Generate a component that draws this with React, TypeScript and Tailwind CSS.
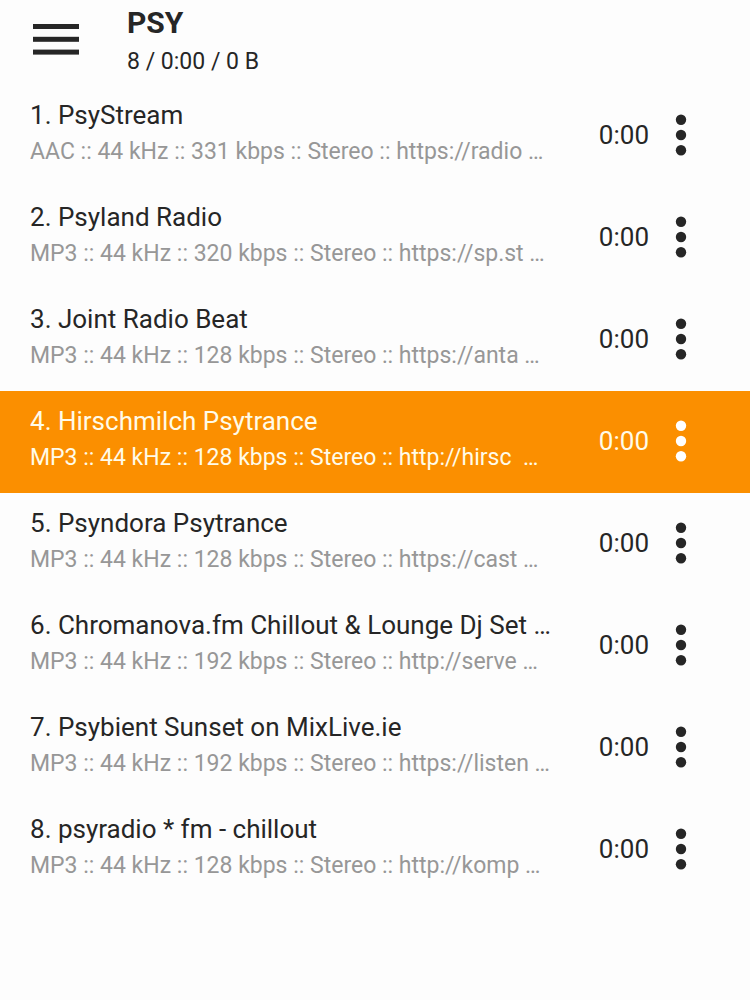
import React from 'react';

interface Station {
  title: string;
  info: string;
}

const stations: Station[] = [
  { title: 'PsyStream', info: 'AAC :: 44 kHz :: 331 kbps :: Stereo :: https://radio …' },
  { title: 'Psyland Radio', info: 'MP3 :: 44 kHz :: 320 kbps :: Stereo :: https://sp.st …' },
  { title: 'Joint Radio Beat', info: 'MP3 :: 44 kHz :: 128 kbps :: Stereo :: https://anta …' },
  { title: 'Hirschmilch Psytrance', info: 'MP3 :: 44 kHz :: 128 kbps :: Stereo :: http://hirsc  …' },
  { title: 'Psyndora Psytrance', info: 'MP3 :: 44 kHz :: 128 kbps :: Stereo :: https://cast …' },
  { title: 'Chromanova.fm Chillout & Lounge Dj Set …', info: 'MP3 :: 44 kHz :: 192 kbps :: Stereo :: http://serve …' },
  { title: 'Psybient Sunset on MixLive.ie', info: 'MP3 :: 44 kHz :: 192 kbps :: Stereo :: https://listen …' },
  { title: 'psyradio * fm - chillout', info: 'MP3 :: 44 kHz :: 128 kbps :: Stereo :: http://komp …' },
];

const ACTIVE_INDEX = 3;

const MenuIcon: React.FC = () => (
  <svg width="46" height="32" viewBox="0 0 46 32" fill="currentColor">
    <rect width="46" height="5" y="0" />
    <rect width="46" height="5" y="12.8" />
    <rect width="46" height="5" y="25.6" />
  </svg>
);

const MoreIcon: React.FC = () => (
  <svg width="12" height="42" viewBox="0 0 12 42" fill="currentColor">
    <circle cx="6" cy="5.8" r="5.2" />
    <circle cx="6" cy="21" r="5.2" />
    <circle cx="6" cy="36.3" r="5.2" />
  </svg>
);

const StationRow: React.FC<{ station: Station; number: number; active: boolean }> = ({ station, number, active }) => (
  <li className={active ? 'flex h-[102px] items-center bg-[#fb8f00] pb-0.5 pl-[30px] text-[#fffbe8]' : 'flex h-[102px] items-center pb-0.5 pl-[30px]'}>
    <div className="min-w-0 flex-1 pb-0.5">
      <div className="truncate text-[26px] leading-[36px]">{number}. {station.title}</div>
      <div className={active ? 'truncate text-[23px] leading-[38px] whitespace-pre' : 'truncate text-[23px] leading-[38px] whitespace-pre text-[#979797]'}>
        {station.info}
      </div>
    </div>
    <span className="shrink-0 text-[26px]">0:00</span>
    <button
      type="button"
      aria-label="More options"
      className={active ? 'flex h-full w-[101px] shrink-0 items-center pl-[26px] text-white' : 'flex h-full w-[101px] shrink-0 items-center pl-[26px]'}
    >
      <MoreIcon />
    </button>
  </li>
);

export default function App() {
  return (
    <div className="min-h-screen bg-[#fdfdfd] font-['Roboto',sans-serif] text-[#262626]">
      <header className="flex h-20 items-center gap-12 pl-[33px]">
        <button type="button" aria-label="Menu">
          <MenuIcon />
        </button>
        <div className="mt-0.5">
          <h1 className="text-[30px] leading-[42px] font-bold">PSY</h1>
          <p className="text-[23px] leading-[36px]">8 / 0:00 / 0 B</p>
        </div>
      </header>
      <ul className="pt-[5px]">
        {stations.map((station, index) => (
          <StationRow key={station.title} station={station} number={index + 1} active={index === ACTIVE_INDEX} />
        ))}
      </ul>
    </div>
  );
}
